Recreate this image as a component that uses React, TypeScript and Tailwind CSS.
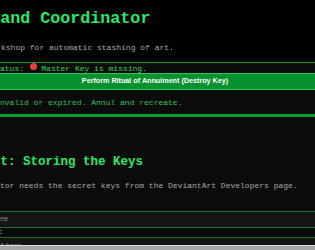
import React from 'react';

// The page is scrolled a little to the right, so most lines start cut at the left edge.
const App: React.FC = () => {
  return (
    <div className="relative w-[315px] h-[250px] overflow-hidden bg-[#0b0b0b] font-['Liberation_Mono','Courier_New',monospace]">
      {/* Header */}
      <div className="h-[62px] bg-black pt-[8.5px]">
        <h1 className="-ml-[130px] whitespace-nowrap text-[16.7px] leading-[20px] font-bold text-[#2ae868]">
          Stash Ritual and Coordinator
        </h1>
        <p className="-ml-[23px] mt-[14.4px] whitespace-nowrap text-[8px] leading-[10px] text-[#a8a8a8]">
          A Workshop for automatic stashing of art.
        </p>
      </div>

      {/* Status panel */}
      <div className="-ml-[20px] w-[350px]">
        <div className="h-px bg-[#1d8a3a] shadow-[0_-1px_4px_rgba(30,160,60,0.5)]" />
        <div className="h-[10px] pl-[10.4px] whitespace-nowrap text-[8px] leading-[10px] text-[#2fd35f]">
          Status:
          <span className="inline-block w-[7px] h-[7px] ml-[5.5px] rounded-full bg-[#e8403c] align-[0.5px]" />
          {' '}Master Key is missing.
        </div>
        <button className="flex h-[17px] w-full items-center justify-center border-y border-[#2cc45a] bg-[#08912f] font-['Liberation_Sans',Arial,sans-serif] text-[7.2px] font-bold text-white">
          Perform Ritual of Annulment (Destroy Key)
        </button>
        <div className="h-[24px] pt-[8.4px]">
          <p className="-ml-[18.4px] whitespace-nowrap text-[8px] leading-[10px] text-[#27c45a]">
            Key is invalid or expired. Annul and recreate.
          </p>
        </div>
        <div className="h-[3px] bg-[#0b9a36]" />
      </div>

      {/* Section */}
      <h2 className="-ml-[29.5px] mt-[37.9px] whitespace-nowrap text-[12.5px] leading-[15px] font-bold text-[#2ae868]">
        First: Storing the Keys
      </h2>
      <p className="-ml-[57.6px] mt-[11px] whitespace-nowrap text-[8px] leading-[10px] text-[#a8a8a8]">
        The Coordinator needs the secret keys from the DeviantArt Developers page.
      </p>

      {/* Key fields */}
      <div className="mt-[20px] flex h-[17px] items-center border-y border-[#1f6b32] bg-[#161616]">
        <div className="flex w-[8.3px] justify-end whitespace-nowrap font-['Liberation_Sans',Arial,sans-serif] text-[8px] text-[#8c8c8c]">
          <span className="shrink-0">Paste Client ID here</span>
        </div>
      </div>
      <div className="h-[9px]">
        <div className="flex w-[3.4px] justify-end whitespace-nowrap text-[8px] leading-[7px] font-bold text-[#2ae868]">
          <span className="shrink-0">Client Secret:</span>
        </div>
      </div>
      <div className="flex h-[17px] items-center border-t border-[#1f6b32] bg-[#141414]">
        <div className="flex w-[21.7px] justify-end whitespace-nowrap font-['Liberation_Sans',Arial,sans-serif] text-[8px] text-[#8c8c8c]">
          <span className="shrink-0">Paste Client Secret here</span>
        </div>
      </div>

      {/* Horizontal scrollbar */}
      <div className="absolute inset-x-0 bottom-0 h-[5px] border-t border-[#dadada] bg-[#a5a5a5]" />
    </div>
  );
};

export default App;
